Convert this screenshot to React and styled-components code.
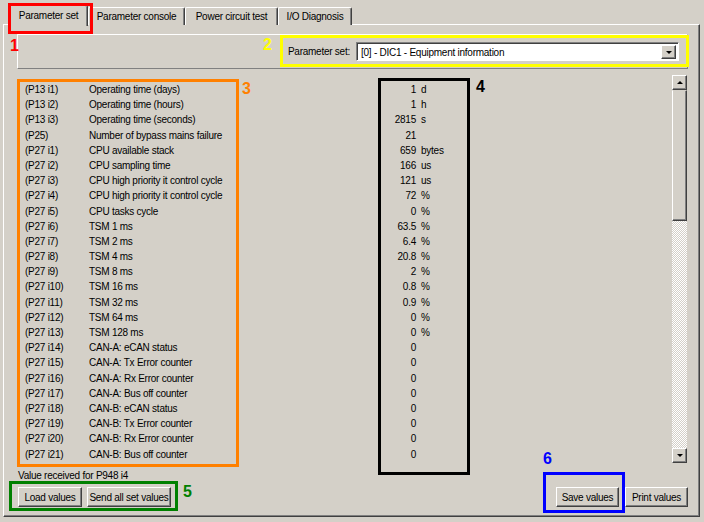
import { Fragment } from "react";
import styled, { createGlobalStyle } from "styled-components";

const GlobalStyle = createGlobalStyle`
  body {
    margin: 0;
    background: #d4d0c8;
  }
`;

const Screen = styled.div`
  position: relative;
  width: 704px;
  height: 522px;
  overflow: hidden;
  background: #d4d0c8;
  font-family: "Liberation Sans", Arial, sans-serif;
  font-size: 10px;
  letter-spacing: -0.25px;
  color: #000;
  box-sizing: border-box;
`;

const TabStrip = styled.div`
  display: flex;
  align-items: flex-end;
  height: 25px;
  padding-left: 9px;
  box-sizing: border-box;
  position: relative;
  z-index: 2;
`;

const Tab = styled.div`
  width: ${(p) => p.$w}px;
  height: ${(p) => (p.$active ? 21 : 18)}px;
  margin-bottom: ${(p) => (p.$active ? -1 : 0)}px;
  box-sizing: border-box;
  display: flex;
  align-items: center;
  justify-content: center;
  padding-bottom: ${(p) => (p.$active ? 2 : 0)}px;
  background: #d4d0c8;
  border: 1px solid;
  border-color: #fff #404040 transparent #fff;
  border-bottom: none;
  box-shadow: inset -1px 0 #808080;
  border-radius: 2px 2px 0 0;
  white-space: nowrap;
`;

const Panel = styled.div`
  margin: -1px 4px 0 3px;
  height: 493px;
  box-sizing: border-box;
  border: 1px solid;
  border-color: #fff #404040 #404040 #fff;
  box-shadow: inset -1px -1px #808080;
  padding: 9px 11px 0 13px;
  display: flex;
  flex-direction: column;
`;

const TopBar = styled.div`
  height: 35px;
  box-sizing: border-box;
  border: 1px solid;
  border-color: #fff #808080 #808080 #fff;
  display: flex;
  align-items: center;
  justify-content: flex-end;
  gap: 6px;
  padding: 0 8px 0 0;
`;

const Combo = styled.div`
  width: 323px;
  height: 19px;
  box-sizing: border-box;
  border: 1px solid;
  border-color: #808080 #fff #fff #808080;
  box-shadow: inset 1px 1px #404040;
  background: #fff;
  display: flex;
  align-items: center;
  justify-content: space-between;
  padding: 2px 2px 1px 4px;
`;

const ArrowButton = styled.div`
  width: ${(p) => p.$w || 15}px;
  height: ${(p) => p.$h || 15}px;
  box-sizing: border-box;
  background: #d4d0c8;
  border: 1px solid;
  border-color: #fff #404040 #404040 #fff;
  box-shadow: inset -1px -1px #808080;
  display: flex;
  align-items: center;
  justify-content: center;
  flex-shrink: 0;
`;

const Arrow = styled.div`
  width: 0;
  height: 0;
  border-left: 3px solid transparent;
  border-right: 3px solid transparent;
  ${(p) => (p.$up ? "border-bottom" : "border-top")}: 3px solid #000;
  margin-bottom: ${(p) => (p.$up ? 1 : 0)}px;
`;

const Content = styled.div`
  display: flex;
  margin-top: 6px;
  height: 388px;
`;

const List = styled.div`
  flex: 1;
  padding: 7px 0 0 8px;
  display: grid;
  grid-template-columns: 64px 251px 76px auto;
  grid-auto-rows: 15.2px;
  align-content: start;
  line-height: 15.2px;
  white-space: nowrap;
`;

const Value = styled.span`
  text-align: right;
`;

const Unit = styled.span`
  padding-left: 5px;
`;

const Scrollbar = styled.div`
  width: 15px;
  margin-right: 1px;
  display: flex;
  flex-direction: column;
`;

const Thumb = styled.div`
  height: 131px;
  box-sizing: border-box;
  border: 1px solid;
  border-color: #d4d0c8 #404040 #404040 #fff;
  box-shadow: inset -1px -1px #808080;
  background: #d4d0c8;
`;

const Track = styled.div`
  flex: 1;
  background: conic-gradient(#fff 90deg, #d4d0c8 90deg 180deg, #fff 180deg 270deg, #d4d0c8 270deg) 0 0 / 2px 2px;
`;

const Status = styled.div`
  margin: 7px 0 0 1px;
  line-height: 12px;
`;

const Footer = styled.div`
  display: flex;
  justify-content: space-between;
  margin-top: 5px;
  padding-left: 1px;
`;

const ButtonGroup = styled.div`
  display: flex;
  gap: ${(p) => p.$gap || 5}px;
`;

const Button = styled.button`
  width: ${(p) => p.$w}px;
  height: 20px;
  padding: 0;
  box-sizing: border-box;
  font: inherit;
  letter-spacing: inherit;
  white-space: nowrap;
  color: #000;
  background: #d4d0c8;
  border: 1px solid;
  border-color: #fff #404040 #404040 #fff;
  box-shadow: inset -1px -1px #808080;
`;

const Marker = styled.div`
  position: absolute;
  left: ${(p) => p.$x}px;
  top: ${(p) => p.$y}px;
  width: ${(p) => p.$w}px;
  height: ${(p) => p.$h}px;
  box-sizing: border-box;
  border: 3px solid ${(p) => p.$color};
  pointer-events: none;
  z-index: 5;
`;

const Tag = styled.div`
  position: absolute;
  left: ${(p) => p.$x}px;
  top: ${(p) => p.$y}px;
  color: ${(p) => p.$color};
  font-family: "Liberation Sans", Arial, sans-serif;
  font-size: 16px;
  font-weight: bold;
  letter-spacing: 0;
  line-height: 16px;
  z-index: 5;
`;

const rows = [
  ["(P13 i1)", "Operating time (days)", "1", "d"],
  ["(P13 i2)", "Operating time (hours)", "1", "h"],
  ["(P13 i3)", "Operating time (seconds)", "2815", "s"],
  ["(P25)", "Number of bypass mains failure", "21", ""],
  ["(P27 i1)", "CPU available stack", "659", "bytes"],
  ["(P27 i2)", "CPU sampling time", "166", "us"],
  ["(P27 i3)", "CPU high priority it control cycle", "121", "us"],
  ["(P27 i4)", "CPU high priority it control cycle", "72", "%"],
  ["(P27 i5)", "CPU tasks cycle", "0", "%"],
  ["(P27 i6)", "TSM 1 ms", "63.5", "%"],
  ["(P27 i7)", "TSM 2 ms", "6.4", "%"],
  ["(P27 i8)", "TSM 4 ms", "20.8", "%"],
  ["(P27 i9)", "TSM 8 ms", "2", "%"],
  ["(P27 i10)", "TSM 16 ms", "0.8", "%"],
  ["(P27 i11)", "TSM 32 ms", "0.9", "%"],
  ["(P27 i12)", "TSM 64 ms", "0", "%"],
  ["(P27 i13)", "TSM 128 ms", "0", "%"],
  ["(P27 i14)", "CAN-A: eCAN status", "0", ""],
  ["(P27 i15)", "CAN-A: Tx Error counter", "0", ""],
  ["(P27 i16)", "CAN-A: Rx Error counter", "0", ""],
  ["(P27 i17)", "CAN-A: Bus off counter", "0", ""],
  ["(P27 i18)", "CAN-B: eCAN status", "0", ""],
  ["(P27 i19)", "CAN-B: Tx Error counter", "0", ""],
  ["(P27 i20)", "CAN-B: Rx Error counter", "0", ""],
  ["(P27 i21)", "CAN-B: Bus off counter", "0", ""],
];

const tabs = [
  { label: "Parameter set", w: 79, active: true },
  { label: "Parameter console", w: 97 },
  { label: "Power circuit test", w: 93 },
  { label: "I/O Diagnosis", w: 74 },
];

const App = () => {
  return (
    <Screen>
      <GlobalStyle />
      <TabStrip>
        {tabs.map((t) => (
          <Tab key={t.label} $w={t.w} $active={t.active}>
            {t.label}
          </Tab>
        ))}
      </TabStrip>
      <Panel>
        <TopBar>
          <span>Parameter set:</span>
          <Combo>
            <span>[0] - DIC1 - Equipment information</span>
            <ArrowButton $w={15} $h={14}>
              <Arrow />
            </ArrowButton>
          </Combo>
        </TopBar>
        <Content>
          <List>
            {rows.map(([id, name, value, unit]) => (
              <Fragment key={id}>
                <span>{id}</span>
                <span>{name}</span>
                <Value>{value}</Value>
                <Unit>{unit}</Unit>
              </Fragment>
            ))}
          </List>
          <Scrollbar>
            <ArrowButton>
              <Arrow $up />
            </ArrowButton>
            <Thumb />
            <Track />
            <ArrowButton>
              <Arrow />
            </ArrowButton>
          </Scrollbar>
        </Content>
        <Status>Value received for P948 i4</Status>
        <Footer>
          <ButtonGroup $gap={5}>
            <Button $w={64}>Load values</Button>
            <Button $w={84}>Send all set values</Button>
          </ButtonGroup>
          <ButtonGroup $gap={6}>
            <Button $w={63}>Save values</Button>
            <Button $w={63}>Print values</Button>
          </ButtonGroup>
        </Footer>
      </Panel>

      <Marker $x={8} $y={3} $w={85} $h={31} $color="#ff0000" />
      <Tag $x={10} $y={38} $color="#ff0000">1</Tag>
      <Marker $x={280} $y={35} $w={409} $h={32} $color="#ffff00" />
      <Tag $x={263} $y={37} $color="#ffff00">2</Tag>
      <Marker $x={17} $y={79} $w={222} $h={388} $color="#ff8000" />
      <Tag $x={242} $y={81} $color="#ff8000">3</Tag>
      <Marker $x={378} $y={78} $w={92} $h={397} $color="#000000" />
      <Tag $x={476} $y={79} $color="#000000">4</Tag>
      <Marker $x={9} $y={481} $w={169} $h={30} $color="#008000" />
      <Tag $x={183} $y={484} $color="#008000">5</Tag>
      <Marker $x={543} $y={472} $w={82} $h={41} $color="#0000ff" />
      <Tag $x={543} $y={451} $color="#0000ff">6</Tag>
    </Screen>
  );
};

export default App;
